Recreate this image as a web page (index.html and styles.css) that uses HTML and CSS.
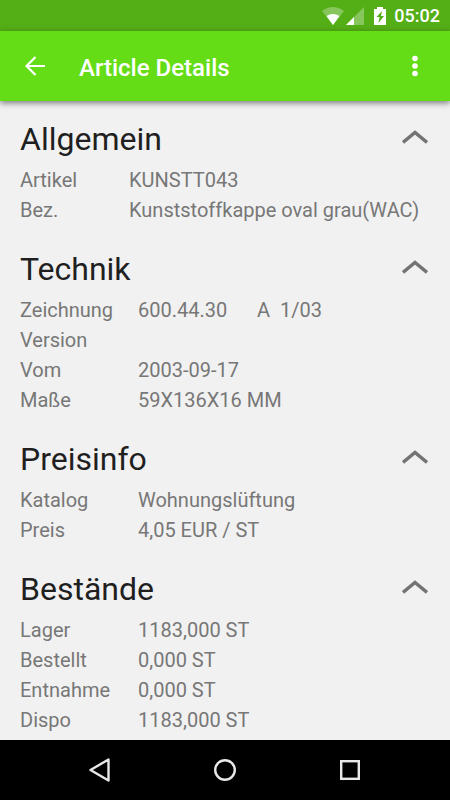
FILE: index.html
```html
<!DOCTYPE html>
<html lang="de">
<head>
<meta charset="utf-8">
<meta name="viewport" content="width=device-width, initial-scale=1">
<title>Article Details</title>
<link rel="stylesheet" href="styles.css">
</head>
<body>
<div class="status-bar">
  <svg class="wifi" width="22" height="18" viewBox="0 0 22 18" aria-hidden="true">
    <path d="M0 4Q11 -4 22 4L11 18Z" fill="#fff" fill-opacity=".3"/>
    <path d="M4.500 9Q11 5 17.500 9L11 18Z" fill="#fff"/>
  </svg>
  <svg class="signal" width="18" height="18" viewBox="0 0 18 18" aria-hidden="true">
    <path d="M18 0V18H0Z" fill="#fff" fill-opacity=".3"/>
    <path d="M8 10V18H0Z" fill="#fff"/>
  </svg>
  <svg class="battery" width="12" height="18" viewBox="0 0 12 18" aria-hidden="true">
    <path fill-rule="evenodd" d="M3 0H9V2H12V18H0V2H3ZM8 4L2.500 10H5.500L4.500 16L10 9H7Z" fill="#fff"/>
  </svg>
  <span class="clock">05:02</span>
</div>
<header class="app-bar">
  <button class="icon-button" type="button" aria-label="Back">
    <svg width="20" height="20" viewBox="0 0 20 20" aria-hidden="true"><path d="M20 10H2M10.500 1L1.500 10L10.500 19" fill="none" stroke="#fff" stroke-width="2.200"/></svg>
  </button>
  <h1>Article Details</h1>
  <button class="icon-button" type="button" aria-label="More options">
    <svg width="6" height="22" viewBox="0 0 6 22" fill="#fff" aria-hidden="true"><circle cx="3" cy="3.500" r="2.800"/><circle cx="3" cy="11" r="2.800"/><circle cx="3" cy="18.500" r="2.800"/></svg>
  </button>
</header>
<main>
  <section>
    <div class="section-head">
      <h2>Allgemein</h2>
      <button class="toggle" type="button" aria-expanded="true" aria-label="Allgemein"><svg width="26" height="14" viewBox="0 0 26 14" aria-hidden="true"><path d="M1 12.500L13 2.500L25 12.500" fill="none" stroke="#737373" stroke-width="3.400"/></svg></button>
    </div>
    <dl class="narrow">
      <dt>Artikel</dt><dd>KUNSTT043</dd>
      <dt>Bez.</dt><dd>Kunststoffkappe oval grau(WAC)</dd>
    </dl>
  </section>
  <section>
    <div class="section-head">
      <h2>Technik</h2>
      <button class="toggle" type="button" aria-expanded="true" aria-label="Technik"><svg width="26" height="14" viewBox="0 0 26 14" aria-hidden="true"><path d="M1 12.500L13 2.500L25 12.500" fill="none" stroke="#737373" stroke-width="3.400"/></svg></button>
    </div>
    <dl>
      <dt>Zeichnung</dt><dd>600.44.30      A  1/03</dd>
      <dt>Version</dt><dd></dd>
      <dt>Vom</dt><dd>2003-09-17</dd>
      <dt>Maße</dt><dd>59X136X16 MM</dd>
    </dl>
  </section>
  <section>
    <div class="section-head">
      <h2>Preisinfo</h2>
      <button class="toggle" type="button" aria-expanded="true" aria-label="Preisinfo"><svg width="26" height="14" viewBox="0 0 26 14" aria-hidden="true"><path d="M1 12.500L13 2.500L25 12.500" fill="none" stroke="#737373" stroke-width="3.400"/></svg></button>
    </div>
    <dl>
      <dt>Katalog</dt><dd>Wohnungslüftung</dd>
      <dt>Preis</dt><dd>4,05 EUR / ST</dd>
    </dl>
  </section>
  <section>
    <div class="section-head">
      <h2>Bestände</h2>
      <button class="toggle" type="button" aria-expanded="true" aria-label="Bestände"><svg width="26" height="14" viewBox="0 0 26 14" aria-hidden="true"><path d="M1 12.500L13 2.500L25 12.500" fill="none" stroke="#737373" stroke-width="3.400"/></svg></button>
    </div>
    <dl>
      <dt>Lager</dt><dd>1183,000 ST</dd>
      <dt>Bestellt</dt><dd>0,000 ST</dd>
      <dt>Entnahme</dt><dd>0,000 ST</dd>
      <dt>Dispo</dt><dd>1183,000 ST</dd>
    </dl>
  </section>
</main>
<nav class="nav-bar" aria-label="System">
  <button type="button" aria-label="Back"><svg width="24" height="24" viewBox="0 0 24 24" aria-hidden="true"><path d="M20.500 1.500V22.500L2.500 12Z" fill="none" stroke="#e8e8e8" stroke-width="2.400" stroke-linejoin="round"/></svg></button>
  <button type="button" aria-label="Home"><svg width="24" height="24" viewBox="0 0 24 24" aria-hidden="true"><circle cx="12" cy="12" r="9.800" fill="none" stroke="#e8e8e8" stroke-width="2.400"/></svg></button>
  <button type="button" aria-label="Recent apps"><svg width="24" height="24" viewBox="0 0 24 24" aria-hidden="true"><rect x="3.200" y="3.200" width="17.600" height="17.600" fill="none" stroke="#e8e8e8" stroke-width="2.400"/></svg></button>
</nav>
</body>
</html>
```
FILE: styles.css
```css
* {
  box-sizing: border-box;
}

body {
  margin: 0;
  min-height: 100vh;
  display: flex;
  flex-direction: column;
  background: #f1f1f1;
  color: #777;
  font-family: Roboto, sans-serif;
}

button {
  display: flex;
  align-items: center;
  justify-content: center;
  padding: 0;
  border: 0;
  background: none;
}

h1, h2, dl, dd {
  margin: 0;
}

.status-bar {
  height: 31px;
  padding: 0 10px;
  display: flex;
  align-items: center;
  justify-content: flex-end;
  background: #54ae16;
  color: #fff;
}

.signal {
  margin-left: 2px;
}

.battery {
  margin-left: 10px;
}

.clock {
  margin-left: 8px;
  font-size: 18px;
  font-weight: 500;
}

.app-bar {
  height: 70px;
  padding: 0 15px;
  display: flex;
  align-items: center;
  background: #64dd17;
  box-shadow: 0 2px 6px rgba(0, 0, 0, 0.5);
}

.app-bar h1 {
  flex: 1;
  padding: 3px 0 0 24px;
  color: #fff;
  font-size: 24px;
  font-weight: 500;
}

.icon-button {
  width: 40px;
  height: 40px;
}

main {
  flex: 1;
  padding: 19px 20px 0;
}

section {
  margin-bottom: 25px;
}

.section-head {
  height: 45px;
  display: flex;
  align-items: flex-start;
  justify-content: space-between;
}

h2 {
  color: #1f1f1f;
  font-size: 32px;
  font-weight: 400;
  line-height: 38px;
}

.toggle {
  width: 30px;
  height: 34px;
}

dl {
  display: grid;
  grid-template-columns: 118px 1fr;
  font-size: 20px;
  font-weight: 400;
  line-height: 30px;
}

dl.narrow {
  grid-template-columns: 109px 1fr;
}

dd {
  white-space: pre-wrap;
}

main section:last-child {
  margin-bottom: 4px;
}

.nav-bar {
  height: 60px;
  padding: 0 38px;
  display: grid;
  grid-template-columns: repeat(3, 1fr);
  background: #000;
}
```
